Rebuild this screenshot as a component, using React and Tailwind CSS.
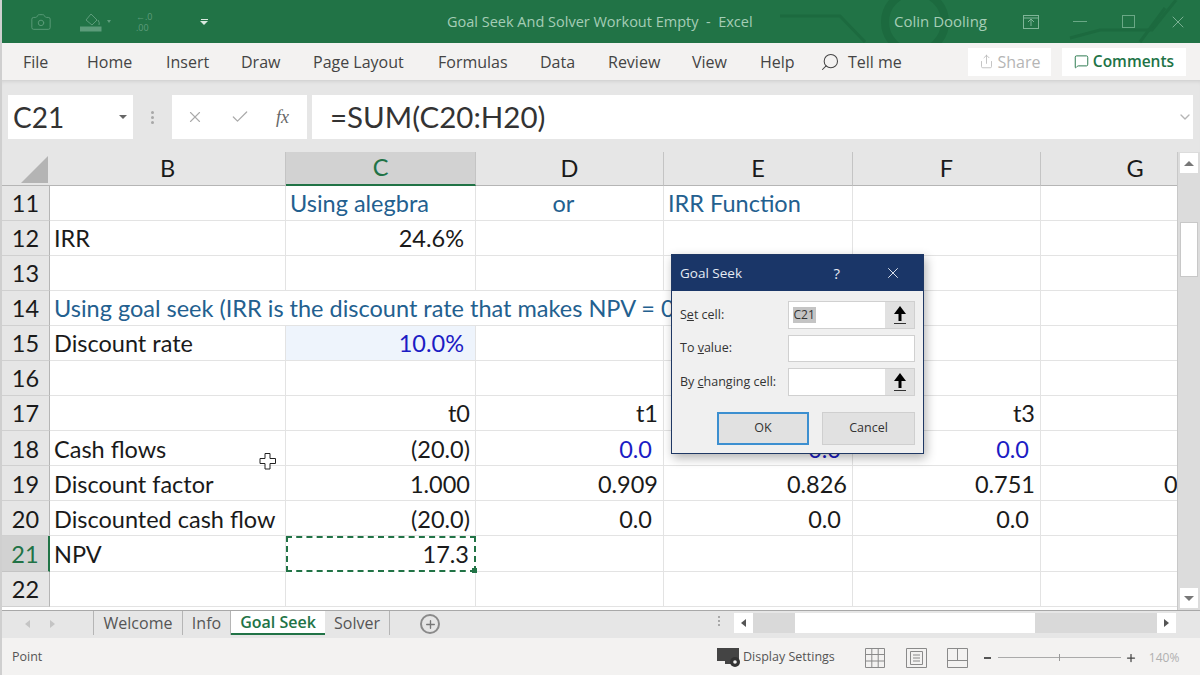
import React from 'react';
import { Camera, Check, ChevronDown, MessageSquare, Plus, Search, Share, X } from 'lucide-react';

const ui = 'font-["Open_Sans",sans-serif]';
const sheet = 'font-["Lato",sans-serif]';

const columns = ['B', 'C', 'D', 'E', 'F', 'G'];
const heading = 'text-[#23608f]';
const input = 'text-[#1c1cc4]';

// each cell: text, optional right-align, extra right pad (number format) and colour
const rows = [
  { n: 11, cells: { C: { t: 'Using alegbra', color: heading }, D: { t: 'or', color: heading, center: true }, E: { t: 'IRR Function', color: heading } } },
  { n: 12, cells: { B: { t: 'IRR' }, C: { t: '24.6%', right: true, pad: true } } },
  { n: 13, cells: {} },
  { n: 14, span: 'Using goal seek (IRR is the discount rate that makes NPV = 0)', cells: {} },
  { n: 15, cells: { B: { t: 'Discount rate' }, C: { t: '10.0%', right: true, pad: true, color: input, bg: 'bg-[#eef4fc]' } } },
  { n: 16, cells: {} },
  { n: 17, cells: { C: { t: 't0', right: true }, D: { t: 't1', right: true }, E: { t: 't2', right: true }, F: { t: 't3', right: true }, G: { t: 't4', right: true } } },
  { n: 18, cells: { B: { t: 'Cash flows' }, C: { t: '(20.0)', right: true }, D: { t: '0.0', right: true, pad: true, color: input }, E: { t: '0.0', right: true, pad: true, color: input }, F: { t: '0.0', right: true, pad: true, color: input } } },
  { n: 19, cells: { B: { t: 'Discount factor' }, C: { t: '1.000', right: true }, D: { t: '0.909', right: true }, E: { t: '0.826', right: true }, F: { t: '0.751', right: true }, G: { t: '0.683', right: true } } },
  { n: 20, cells: { B: { t: 'Discounted cash flow' }, C: { t: '(20.0)', right: true }, D: { t: '0.0', right: true, pad: true }, E: { t: '0.0', right: true, pad: true }, F: { t: '0.0', right: true, pad: true } } },
  { n: 21, active: true, cells: { B: { t: 'NPV' }, C: { t: '17.3', right: true, selected: true } } },
  { n: 22, cells: {} },
];

const tabs = [
  { name: 'Welcome', w: 'w-[89px]' },
  { name: 'Info', w: 'w-[48px]' },
  { name: 'Goal Seek', w: 'w-[94px]', active: true },
  { name: 'Solver', w: 'w-[65px]' },
];

const menu = [
  { name: 'File', w: 'w-[64px]' },
  { name: 'Home', w: 'w-[79px]' },
  { name: 'Insert', w: 'w-[75px]' },
  { name: 'Draw', w: 'w-[72px]' },
  { name: 'Page Layout', w: 'w-[125px]' },
  { name: 'Formulas', w: 'w-[102px]' },
  { name: 'Data', w: 'w-[68px]' },
  { name: 'Review', w: 'w-[84px]' },
  { name: 'View', w: 'w-[68px]' },
  { name: 'Help', w: 'w-[60px]' },
];

function Cell({ cell }) {
  if (!cell) return <div className="border-r border-b border-[#e3e3e3]" />;
  return (
    <div
      className={`relative flex items-center whitespace-nowrap pt-[2px] text-[23.5px] ${cell.color || 'text-[#1a1a1a]'} ${cell.bg || ''} ${
        cell.right ? 'justify-end' : cell.center ? 'justify-center pr-3' : 'pl-[4px]'
      } ${cell.right ? (cell.pad ? 'pr-[11px]' : 'pr-[5px]') : ''} ${
        cell.selected ? 'border-2 border-dashed border-[#217346]' : 'border-r border-b border-[#e3e3e3]'
      }`}
    >
      {cell.t}
      {cell.selected && <span className="absolute -right-[3px] -bottom-[3px] h-[5px] w-[5px] bg-[#217346]" />}
    </div>
  );
}

function RefArrow() {
  return (
    <div className="flex w-[29px] items-center justify-center bg-[#e1e1e1]">
      <svg width="16" height="20" viewBox="0 0 16 20">
        <path d="M8 1 L14 9 H9.5 V16 H6.5 V9 H2 Z" fill="#000" />
        <rect x="2" y="18" width="12" height="1" fill="#333" />
      </svg>
    </div>
  );
}

function GoalSeek() {
  return (
    <div className={`${ui} absolute left-[669px] top-[254px] z-10 flex h-[200px] w-[253px] flex-col border border-[#1f3864] bg-[#f0f0f0] shadow-[2px_4px_10px_rgba(0,0,0,0.3)]`}>
      <div className="flex h-[36px] items-center bg-[#1a3668] text-[#e6ebf3]">
        <span className="ml-[8px] flex-1 text-[13.5px]">Goal Seek</span>
        <span className="mr-[44px] text-[15px]">?</span>
        <X size={18} strokeWidth={1.25} className="mr-[21px]" />
      </div>
      <div className="flex flex-col gap-[6px] px-[8px] pt-[10px] text-[12.5px] text-[#333]">
        <div className="flex h-[28px] items-center">
          <span className="w-[108px]">S<u>e</u>t cell:</span>
          <div className="flex h-full w-[128px] border border-[#d0d0d0] bg-white">
            <span className="ml-[4px] self-center bg-[#c4c4c4] px-px text-[12px] leading-[16px]">C21</span>
            <span className="flex-1" />
            <RefArrow />
          </div>
        </div>
        <div className="flex h-[27px] items-center">
          <span className="w-[108px]">To <u>v</u>alue:</span>
          <div className="h-full w-[128px] border border-[#d0d0d0] bg-white" />
        </div>
        <div className="flex h-[28px] items-center">
          <span className="w-[108px] whitespace-nowrap">By <u>c</u>hanging cell:</span>
          <div className="flex h-full w-[128px] border border-[#d0d0d0] bg-white">
            <span className="flex-1" />
            <RefArrow />
          </div>
        </div>
      </div>
      <div className="ml-[45px] mt-[16px] flex gap-[13px] text-[12.5px] text-[#333]">
        <button className="h-[33px] w-[92px] border-2 border-[#3c8fd0] bg-[#e1e1e1]">OK</button>
        <button className="h-[33px] w-[93px] border border-[#cfcfcf] bg-[#e1e1e1]">Cancel</button>
      </div>
    </div>
  );
}

export default function App() {
  return (
    <div className={`${ui} relative flex h-[675px] w-[1200px] flex-col overflow-hidden border-l-2 border-[#cfcfcf] bg-[#e6e6e6]`}>
      <span className="absolute -left-[2px] top-[29px] h-[27px] w-[2px] bg-[#2b579a]" />

      {/* title bar */}
      <div className="relative flex h-[43px] shrink-0 items-center bg-[#217346] text-[#a5cdb6]">
        <svg className="absolute right-0 top-0" width="420" height="43" viewBox="0 0 420 43" fill="none" stroke="#1c6a3f" strokeWidth="3">
          <circle cx="135" cy="22" r="30" strokeWidth="8" />
          <path d="M0 16 H60 L85 42" />
          <path d="M290 38 L320 30 H372 L396 0" />
          <path d="M360 42 L385 8" />
        </svg>
        <Camera size={22} strokeWidth={1} className="ml-[28px] text-[#5d9c7b]" />
        <svg className="ml-[28px]" width="24" height="22" viewBox="0 0 24 22" fill="none" stroke="#5d9c7b">
          <path d="M6 9 L11 3 L17 9 L12 14 Z" />
          <path d="M18 9 q2 3 1 5" />
          <rect x="0" y="16" width="21" height="4" fill="#5d9c7b" />
        </svg>
        <span className="ml-[3px] h-0 w-0 border-x-[2px] border-t-[3px] border-x-transparent border-t-[#5d9c7b]" />
        <div className="ml-[25px] w-[20px] whitespace-nowrap text-[9px] leading-[11px] text-[#5d9c7b]">
          <div>←.0</div>
          <div>.00</div>
        </div>
        <div className="ml-[44px] flex flex-col items-center gap-px">
          <span className="h-px w-[7px] bg-[#d9e8df]" />
          <span className="h-0 w-0 border-x-[4px] border-t-[4px] border-x-transparent border-t-[#d9e8df]" />
        </div>
        <span className="absolute left-[445px] whitespace-pre text-[14.5px]">Goal Seek And Solver Workout Empty  -  Excel</span>
        <span className="absolute left-[892px] text-[15px]">Colin Dooling</span>
        <svg className="absolute left-[1021px]" width="16" height="14" viewBox="0 0 16 14" fill="none" stroke="#7fb598">
          <rect x="0.5" y="0.5" width="15" height="13" />
          <path d="M8 11 V4 M5 7 L8 4 L11 7 M1 3 H15" />
        </svg>
        <span className="absolute left-[1071px] h-px w-[14px] bg-[#6aa886]" />
        <span className="absolute left-[1120px] h-[13px] w-[13px] border border-[#6aa886]" />
        <X size={20} strokeWidth={1} className="absolute left-[1166px] text-[#8dbda2]" />
      </div>

      {/* ribbon tabs */}
      <div className="flex h-[37px] shrink-0 items-center bg-[#f3f2f1] text-[16px] text-[#444]">
        <div className="ml-[21px] flex">
          {menu.map((m) => (
            <span key={m.name} className={`whitespace-nowrap ${m.w}`}>{m.name}</span>
          ))}
        </div>
        <Search size={20} strokeWidth={1.25} className="-scale-x-100" />
        <span className="ml-[8px] w-[54px] whitespace-nowrap">Tell me</span>
        <div className="ml-[66px] flex h-[28px] w-[83px] items-center justify-center gap-1 bg-white text-[#b5b5b5]">
          <Share size={15} strokeWidth={1.25} />
          <span>Share</span>
        </div>
        <div className="ml-[11px] flex h-[28px] w-[124px] items-center justify-center gap-1 bg-white text-[15.5px] font-semibold text-[#217346]">
          <MessageSquare size={15} strokeWidth={1.5} />
          <span>Comments</span>
        </div>
      </div>

      {/* formula bar */}
      <div className="flex h-[72px] shrink-0 items-start bg-[#e6e6e6] pl-[6px] pt-[15px] shadow-[inset_0_4px_4px_-3px_rgba(0,0,0,0.12)]">
        <div className={`${sheet} flex h-[44px] w-[125px] items-center bg-white pl-[5px] text-[28px] text-[#333]`}>
          <span className="flex-1">C21</span>
          <span className="mr-[6px] h-0 w-0 border-x-[4px] border-t-[4px] border-x-transparent border-t-[#666]" />
        </div>
        <div className="flex h-[44px] w-[39px] flex-col items-center justify-center gap-[2px]">
          <span className="h-[3px] w-[3px] rounded-full bg-[#a8a8a8]" />
          <span className="h-[3px] w-[3px] rounded-full bg-[#a8a8a8]" />
          <span className="h-[3px] w-[3px] rounded-full bg-[#a8a8a8]" />
        </div>
        <div className="flex h-[44px] w-[135px] items-center bg-white text-[#aaa]">
          <X size={18} strokeWidth={1.5} className="ml-[14px]" />
          <Check size={20} strokeWidth={1.5} className="ml-[26px]" />
          <span className="ml-[26px] font-['Liberation_Serif',serif] text-[18px] italic text-[#666]">fx</span>
        </div>
        <div className={`${sheet} ml-[5px] flex h-[44px] w-[881px] items-center bg-white pl-[18px] text-[29.5px] text-[#333]`}>
          <span className="flex-1">=SUM(C20:H20)</span>
          <ChevronDown size={16} strokeWidth={2} className="text-[#b5b5b5]" />
        </div>
      </div>

      {/* sheet */}
      <div className="flex h-[458px] shrink-0 bg-white">
        <div className={`${sheet} w-[1175px] overflow-hidden`}>
          <div className="grid w-[1239px] grid-cols-[48px_236px_190px_188px_189px_188px_189px] auto-rows-[35.1px] [grid-template-rows:33.5px]">
            <div className="relative border-b border-[#b5b5b5] bg-[#e6e6e6]">
              <span className="absolute bottom-[2px] right-[2px] h-0 w-0 border-b-[27px] border-l-[27px] border-b-[#b4b4b4] border-l-transparent" />
            </div>
            {columns.map((c) => (
              <div
                key={c}
                className={`flex items-center justify-center border-r text-[23.5px] ${
                  c === 'C'
                    ? 'border-b-2 border-r-[#c4c4c4] border-b-[#217346] bg-[#d2d2d2] text-[#217346]'
                    : 'border-b border-r-[#c4c4c4] border-b-[#b5b5b5] bg-[#e6e6e6] text-[#1a1a1a]'
                }`}
              >
                {c}
              </div>
            ))}
            {rows.map((r) => (
              <React.Fragment key={r.n}>
                <div
                  className={`flex items-center justify-center pt-[2px] text-[23.5px] ${
                    r.active
                      ? 'border-r-2 border-b border-r-[#217346] border-b-[#c4c4c4] bg-[#d2d2d2] text-[#217346]'
                      : 'border-r border-b border-r-[#b5b5b5] border-b-[#d0d0d0] bg-[#e6e6e6] text-[#1a1a1a]'
                  }`}
                >
                  {r.n}
                </div>
                {r.span ? (
                  <>
                    <div className={`col-span-4 flex items-center whitespace-nowrap border-r border-b border-[#e3e3e3] pl-[4px] pt-[2px] text-[23.5px] ${heading}`}>{r.span}</div>
                    <Cell />
                    <Cell />
                  </>
                ) : (
                  columns.map((c) => <Cell key={c} cell={r.cells[c]} />)
                )}
              </React.Fragment>
            ))}
          </div>
        </div>
        {/* vertical scrollbar */}
        <div className="flex w-[23px] flex-col border-l border-[#c8c8c8] bg-[#dcdcdc] px-[2px] pb-[2px]">
          <div className="mt-[1px] flex h-[20px] items-center justify-center bg-white">
            <span className="h-0 w-0 border-x-[5px] border-b-[5px] border-x-transparent border-b-[#777]" />
          </div>
          <div className="mt-[49px] h-[55px] border border-[#c8c8c8] bg-white" />
          <div className="flex-1" />
          <div className="flex h-[20px] items-center justify-center bg-white">
            <span className="h-0 w-0 border-x-[5px] border-t-[5px] border-x-transparent border-t-[#777]" />
          </div>
        </div>
      </div>

      {/* sheet tabs */}
      <div className="flex h-[28px] shrink-0 items-start border-t border-[#a8a8a8] bg-[#e6e6e6] text-[16px] text-[#555]">
        <span className="ml-[23px] mt-[9px] h-0 w-0 border-y-[4px] border-r-[5px] border-y-transparent border-r-[#c4c4c4]" />
        <span className="ml-[20px] mt-[9px] h-0 w-0 border-y-[4px] border-l-[5px] border-y-transparent border-l-[#c4c4c4]" />
        <div className="ml-[38px] flex h-[24px] border-l border-[#b5b5b5]">
          {tabs.map((t) => (
            <div
              key={t.name}
              className={`flex items-center justify-center ${t.w} ${
                t.active
                  ? 'border-b-2 border-b-[#217346] bg-white font-semibold text-[#217346]'
                  : 'border-r border-[#b5b5b5]'
              }`}
            >
              {t.name}
            </div>
          ))}
        </div>
        <div className="ml-[30px] mt-[3px] flex h-[20px] w-[20px] items-center justify-center rounded-full border-2 border-[#8a8a8a]">
          <Plus size={13} strokeWidth={2.5} className="text-[#777]" />
        </div>
        <div className="ml-[278px] mt-[5px] flex flex-col gap-[2px]">
          <span className="h-[2px] w-[2px] bg-[#a8a8a8]" />
          <span className="h-[2px] w-[2px] bg-[#a8a8a8]" />
          <span className="h-[2px] w-[2px] bg-[#a8a8a8]" />
        </div>
        <div className="ml-[14px] mt-[2px] flex h-[20px] w-[442px] items-center bg-[#d9d9d9]">
          <div className="flex h-full w-[19px] items-center justify-center bg-white">
            <span className="h-0 w-0 border-y-[4px] border-r-[5px] border-y-transparent border-r-[#555]" />
          </div>
          <div className="ml-[42px] h-full w-[240px] bg-white" />
          <div className="flex-1" />
          <div className="flex h-full w-[19px] items-center justify-center bg-white">
            <span className="h-0 w-0 border-y-[4px] border-l-[5px] border-y-transparent border-l-[#555]" />
          </div>
        </div>
      </div>

      {/* status bar */}
      <div className="flex flex-1 items-center bg-[#f3f2f1] pt-[2px] text-[12.5px] text-[#555]">
        <span className="ml-[10px] w-[705px]">Point</span>
        <svg width="26" height="20" viewBox="0 0 26 20">
          <rect x="0" y="0" width="22" height="13" fill="#444" />
          <rect x="8" y="13" width="6" height="3" fill="#444" />
          <circle cx="18" cy="14" r="5" fill="#333" />
          <circle cx="18" cy="14" r="1.8" fill="#f3f2f1" />
        </svg>
        <span className="whitespace-nowrap">Display Settings</span>
        <svg className="ml-[30px]" width="20" height="20" viewBox="0 0 20 20" fill="none" stroke="#8a8a8a">
          <path d="M.5.5h19v19H.5zM.5 6.5h19M.5 13h19M6.8.5v19M13.2.5v19" />
        </svg>
        <svg className="ml-[21px]" width="21" height="20" viewBox="0 0 21 20" fill="none" stroke="#8a8a8a">
          <path d="M.5.5h20v19H.5zM4.5 3.5h12v13h-12zM7 7h7M7 10h7M7 13h7" />
        </svg>
        <svg className="ml-[20px]" width="21" height="20" viewBox="0 0 21 20" fill="none" stroke="#8a8a8a">
          <path d="M.5.5h20v19H.5zM.5 12.5h20M10.5.5v12" />
        </svg>
        <span className="ml-[16px] h-[2px] w-[7px] bg-[#555]" />
        <div className="relative ml-[7px] h-px w-[123px] bg-[#aaa]">
          <span className="absolute left-[61px] -top-[3px] h-[7px] w-px bg-[#999]" />
        </div>
        <Plus size={12} strokeWidth={2.5} className="ml-[4px] text-[#444]" />
        <span className="ml-[12px] text-[12px] text-[#b0b0b0]">140%</span>
      </div>

      <GoalSeek />

      {/* mouse pointer */}
      <svg className="absolute left-[256px] top-[452px] z-10" width="20" height="20" viewBox="0 0 20 20" fill="#fff" stroke="#222">
        <path d="M7 1.5h5v5h5.5v5H12V17H7v-5.5H2v-5h5z" />
      </svg>
    </div>
  );
}
